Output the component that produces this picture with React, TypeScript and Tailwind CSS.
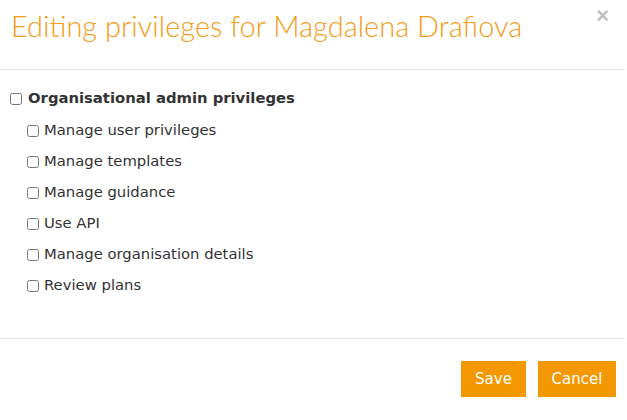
import React, { useState } from "react";

const privileges = [
  "Manage user privileges",
  "Manage templates",
  "Manage guidance",
  "Use API",
  "Manage organisation details",
  "Review plans",
];

export default function App() {
  const [admin, setAdmin] = useState(false);
  const [checked, setChecked] = useState<boolean[]>(privileges.map(() => false));

  return (
    <div className="w-[627px] h-[420px] bg-white flex flex-col" style={{ fontFamily: "'DejaVu Sans', Verdana, sans-serif" }}>
      <div className="relative h-[70px] border-b border-[#e5e5e5] mr-[2px] flex items-start">
        <h1 className="pl-[11px] pt-[10px] text-[29px] leading-[32px] text-[#f59b17] font-[Lato,sans-serif] font-light">
          Editing privileges for Magdalena Drafiova
        </h1>
        <button className="absolute right-[16px] top-[5px] text-[#c0c0c0] text-[22px] font-bold leading-none font-[Arial,'Liberation_Sans',sans-serif]">
          ×
        </button>
      </div>

      <div className="flex-1 border-b border-[#e5e5e5] mr-[2px] pt-[20px] text-[#333] text-[14.8px]">
        <label className="flex items-center pl-[10px] h-[17px] font-bold">
          <input
            type="checkbox"
            checked={admin}
            onChange={e => setAdmin(e.target.checked)}
            className="w-[12px] h-[12px] mr-[6px] m-0"
          />
          Organisational admin privileges
        </label>
        <div className="flex flex-col gap-[14px] pl-[27px] pt-[15px]">
          {privileges.map((p, i) => (
            <label key={p} className="flex items-center h-[17px]">
              <input
                type="checkbox"
                checked={checked[i]}
                onChange={e => setChecked(prev => prev.map((c, j) => (j === i ? e.target.checked : c)))}
                className="w-[12px] h-[12px] mr-[5px] m-0"
              />
              {p}
            </label>
          ))}
        </div>
      </div>

      <div className="h-[81px] flex justify-end items-start gap-[12px] pt-[22px] pr-[11px]">
        <button className="h-[36px] w-[65px] bg-[#f39800] text-white text-[15px]">Save</button>
        <button className="h-[36px] w-[78px] bg-[#f39800] text-white text-[15px]">Cancel</button>
      </div>
    </div>
  );
}
